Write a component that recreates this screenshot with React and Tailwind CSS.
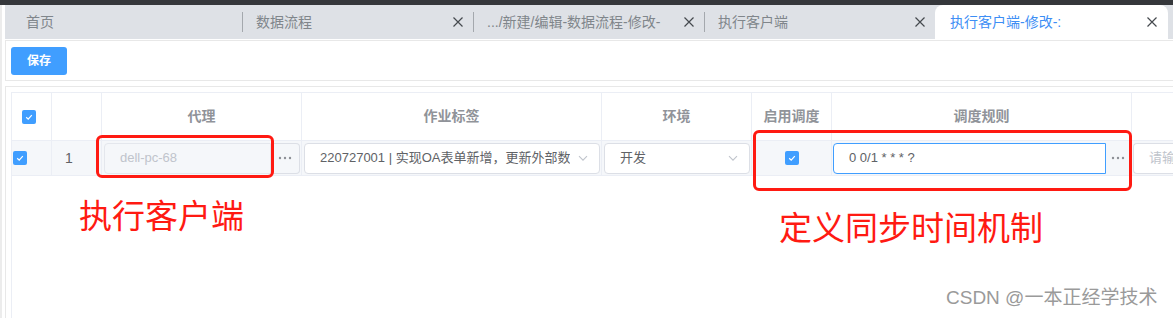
import React from "react";

const XIcon = () => (
  <svg width="12" height="12" viewBox="0 0 12 12" className="shrink-0">
    <path d="M1.5 1.5L10.5 10.5M10.5 1.5L1.5 10.5" stroke="#45494e" strokeWidth="1.2" />
  </svg>
);

const Check = ({ cls = "" }) => (
  <div className={"w-[14px] h-[14px] shrink-0 rounded-[2px] bg-[#409eff] flex items-center justify-center " + cls}>
    <svg width="10" height="10" viewBox="0 0 10 10">
      <path d="M2.2 5.2L4.2 7.1L7.8 3.2" fill="none" stroke="#fff" strokeWidth="1.2" />
    </svg>
  </div>
);

const Chevron = () => (
  <svg width="12" height="12" viewBox="0 0 12 12" className="shrink-0">
    <path d="M2 4.2L6 8.2L10 4.2" fill="none" stroke="#c0c4cc" strokeWidth="1.1" />
  </svg>
);

const Dots = () => (
  <svg width="14" height="4" viewBox="0 0 14 4">
    <circle cx="2" cy="2" r="1.2" fill="#8d9096" />
    <circle cx="7" cy="2" r="1.2" fill="#8d9096" />
    <circle cx="12" cy="2" r="1.2" fill="#8d9096" />
  </svg>
);

const Tab = ({ w, label, sep = true, close = true, pl = "pl-[13px]" }) => (
  <div className={"h-full shrink-0 flex items-center " + w}>
    <div className={"flex-1 flex items-center justify-between pr-[9px] " + pl}>
      <span className="text-[14px] text-[#80868b] whitespace-nowrap">{label}</span>
      {close && <XIcon />}
    </div>
    {sep && <div className="w-px h-[20px] bg-[#a4a8ad]" />}
  </div>
);

export default function App() {
  return (
    <div
      className="w-[1173px] h-[318px] relative overflow-hidden bg-white flex flex-col"
      style={{ fontFamily: '"Liberation Sans", "Noto Sans CJK SC", sans-serif' }}
    >
      <div className="h-[5px] bg-[#35373b] shrink-0" />
      <div className="flex-1 flex min-w-0">
        <div className="w-[2px] shrink-0 bg-[#ececec]" />
        <div className="w-[3px] shrink-0 bg-white" />
        <div className="flex-1 min-w-0 overflow-hidden flex flex-col">
          {/* tab bar */}
          <div className="h-[34px] bg-[#dee1e6] flex items-stretch shrink-0">
            <Tab w="w-[238px]" label="首页" close={false} pl="pl-[21px]" />
            <Tab w="w-[231px]" label="数据流程" />
            <Tab w="w-[231px]" label=".../新建/编辑-数据流程-修改-" />
            <Tab w="w-[230px]" label="执行客户端" sep={false} />
            <div className="w-[233px] shrink-0 h-full bg-white rounded-t-[8px] flex items-center justify-between pl-[15px] pr-[10px]">
              <span className="text-[14px] text-[#3d8ef5] whitespace-nowrap">执行客户端-修改-:</span>
              <XIcon />
            </div>
          </div>
          <div className="h-px bg-white shrink-0" />
          {/* toolbar */}
          <div className="h-[41px] border-t border-b border-l border-[#e8e8e8] flex items-center pl-[5px] shrink-0">
            <div className="w-[56px] h-[28px] bg-[#409eff] rounded-[3px] flex items-center justify-center text-white text-[12px] font-bold">
              保存
            </div>
          </div>
          <div className="h-[5px] shrink-0" />
          {/* table panel */}
          <div className="flex-1 border-t border-l border-[#e8e8e8] pt-[5px] pl-[5px] flex min-w-0">
            <div className="flex-1 min-w-0 border-l border-t border-[#ebeef5] flex flex-col">
              {/* header */}
              <div className="h-[48px] flex text-[14px] font-bold text-[#909399]">
                <div className="w-[40px] shrink-0 border-r border-b border-[#ebeef5] flex items-center pl-[10px]">
                  <Check />
                </div>
                <div className="w-[50px] shrink-0 border-r border-b border-[#ebeef5]" />
                <div className="w-[200px] shrink-0 border-r border-b border-[#ebeef5] flex items-center justify-center">代理</div>
                <div className="w-[300px] shrink-0 border-r border-b border-[#ebeef5] flex items-center justify-center">作业标签</div>
                <div className="w-[150px] shrink-0 border-r border-b border-[#ebeef5] flex items-center justify-center">环境</div>
                <div className="w-[80px] shrink-0 border-r border-b border-[#ebeef5] flex items-center justify-center">启用调度</div>
                <div className="w-[300px] shrink-0 border-r border-b border-[#ebeef5] flex items-center justify-center">调度规则</div>
                <div className="flex-1 min-w-0 border-b border-[#ebeef5]" />
              </div>
              {/* body row */}
              <div className="h-[35px] flex bg-[#f5f7fa] text-[13px] text-[#606266]">
                <div className="w-[40px] shrink-0 border-r border-b border-[#ebeef5] flex items-center pl-[1px]">
                  <Check />
                </div>
                <div className="w-[50px] shrink-0 border-r border-b border-[#ebeef5] flex items-center pl-[13px] text-[14px]">1</div>
                <div className="w-[200px] shrink-0 border-r border-b border-[#ebeef5] flex items-center pl-[2px] pr-[1px]">
                  <div className="w-[167px] h-[31px] border border-[#e4e7ed] bg-[#f5f7fa] rounded-l-[4px] flex items-center pl-[15px] text-[#c0c4cc]">
                    dell-pc-68
                  </div>
                  <div className="flex-1 h-[31px] border border-l-0 border-[#dcdfe6] bg-[#f5f7fa] rounded-r-[4px] flex items-center justify-center">
                    <Dots />
                  </div>
                </div>
                <div className="w-[300px] shrink-0 border-r border-b border-[#ebeef5] flex items-center pl-[2px] pr-[1px]">
                  <div className="flex-1 min-w-0 h-[31px] border border-[#dcdfe6] bg-white rounded-[4px] flex items-center justify-between pl-[15px] pr-[10px]">
                    <span className="whitespace-nowrap overflow-hidden">220727001 | 实现OA表单新增，更新外部数</span>
                    <Chevron />
                  </div>
                </div>
                <div className="w-[150px] shrink-0 border-r border-b border-[#ebeef5] flex items-center pl-[2px] pr-[1px]">
                  <div className="flex-1 h-[31px] border border-[#dcdfe6] bg-white rounded-[4px] flex items-center justify-between pl-[15px] pr-[10px]">
                    <span>开发</span>
                    <Chevron />
                  </div>
                </div>
                <div className="w-[80px] shrink-0 border-r border-b border-[#ebeef5] flex items-center justify-center">
                  <Check />
                </div>
                <div className="w-[300px] shrink-0 border-r border-b border-[#ebeef5] flex items-center pl-[1px] pr-[1px]">
                  <div className="w-[273px] h-[31px] border border-[#409eff] bg-white rounded-l-[4px] flex items-center pl-[15px]">
                    0 0/1 * * * ?
                  </div>
                  <div className="flex-1 h-[31px] flex items-center justify-center">
                    <Dots />
                  </div>
                </div>
                <div className="flex-1 min-w-0 border-b border-[#ebeef5] flex items-center pl-[1px]">
                  <div className="flex-1 min-w-0 h-[31px] border border-r-0 border-[#dcdfe6] bg-white rounded-l-[4px] flex items-center pl-[15px] text-[#c0c4cc] whitespace-nowrap overflow-hidden">
                    请输
                  </div>
                </div>
              </div>
            </div>
          </div>
        </div>
      </div>

      {/* annotations */}
      <div className="absolute left-[96px] top-[135px] w-[178px] h-[43px] border-[3px] border-[#ff1a12] rounded-[6px]" />
      <div className="absolute left-[753px] top-[130px] w-[379px] h-[61px] border-[3px] border-[#ff1a12] rounded-[6px]" />
      <div
        className="absolute left-[79px] top-[198px] text-[33px] leading-none text-[#ff1a12] whitespace-nowrap"
        style={{ fontFamily: '"Noto Sans CJK SC", sans-serif' }}
      >
        执行客户端
      </div>
      <div
        className="absolute left-[779px] top-[210px] text-[33px] leading-none text-[#ff1a12] whitespace-nowrap"
        style={{ fontFamily: '"Noto Sans CJK SC", sans-serif' }}
      >
        定义同步时间机制
      </div>
      <div
        className="absolute left-[946px] top-[288px] text-[19px] leading-none text-[#9a9a9a] whitespace-nowrap"
        style={{ fontFamily: '"Liberation Sans", "Noto Sans CJK SC", sans-serif' }}
      >
        CSDN @一本正经学技术
      </div>
    </div>
  );
}
